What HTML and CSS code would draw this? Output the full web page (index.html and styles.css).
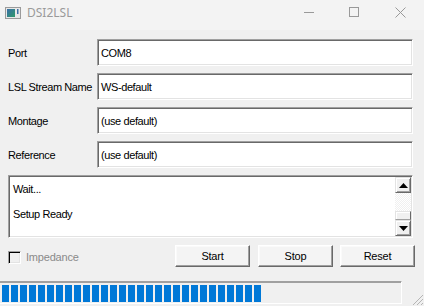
FILE: index.html
```html
<!DOCTYPE html>
<html>
<head>
<meta charset="utf-8">
<link rel="stylesheet" href="styles.css">
</head>
<body>
<div class="window">
  <div class="titlebar">
    <svg class="appicon" width="16" height="12" viewBox="0 0 16 12">
      <defs>
        <linearGradient id="g" x1="0" y1="0" x2="1" y2="1">
          <stop offset="0" stop-color="#3a6ea8"/>
          <stop offset="1" stop-color="#2f9a6a"/>
        </linearGradient>
      </defs>
      <rect x="0.5" y="0.5" width="15" height="11" fill="#e8e8e8" stroke="#9a9a9a"/>
      <rect x="2" y="2" width="8" height="8" fill="url(#g)"/>
      <rect x="12" y="2" width="1.5" height="5" fill="#3d6fa6"/>
    </svg>
    <span class="title">DSI2LSL</span>
    <div class="controls">
      <svg class="ctl" width="46" height="30" viewBox="0 0 46 30"><line x1="18" y1="12.5" x2="28" y2="12.5" stroke="#999" stroke-width="1"/></svg>
      <svg class="ctl" width="46" height="30" viewBox="0 0 46 30"><rect x="17.5" y="7.5" width="9" height="9" fill="none" stroke="#999" stroke-width="1"/></svg>
      <svg class="ctl" width="46" height="30" viewBox="0 0 46 30"><path d="M17.5 7.5 L27.5 17.5 M27.5 7.5 L17.5 17.5" stroke="#999" stroke-width="1"/></svg>
    </div>
  </div>
  <div class="content">
    <div class="row"><label class="lbl">Port</label><div class="field">COM8</div></div>
    <div class="row"><label class="lbl">LSL Stream Name</label><div class="field">WS-default</div></div>
    <div class="row"><label class="lbl">Montage</label><div class="field">(use default)</div></div>
    <div class="row"><label class="lbl">Reference</label><div class="field">(use default)</div></div>
    <div class="log">
      <div class="logtext">
        <div class="line">Wait...</div>
        <div class="line">&nbsp;</div>
        <div class="line">Setup Ready</div>
      </div>
      <div class="scrollbar">
        <div class="sbtn"><svg width="9" height="5" viewBox="0 0 9 5"><path d="M4.5 0 L9 5 L0 5 Z" fill="#000"/></svg></div>
        <div class="track"></div>
        <div class="thumb"></div>
        <div class="sbtn"><svg width="9" height="5" viewBox="0 0 9 5"><path d="M0 0 L9 0 L4.5 5 Z" fill="#000"/></svg></div>
      </div>
    </div>
    <div class="actions">
      <div class="check"><span class="box"></span><span class="checklbl">Impedance</span></div>
      <button class="btn">Start</button>
      <button class="btn">Stop</button>
      <button class="btn">Reset</button>
    </div>
  </div>
  <div class="status">
    <div class="progress"><div class="fill"></div></div>
    <svg class="grip" width="14" height="14" viewBox="0 0 14 14">
      <path d="M13 3 L3 13 M13 7 L7 13 M13 11 L11 13" stroke="#b5b5b5" stroke-width="1"/>
    </svg>
  </div>
</div>
</body>
</html>
```
FILE: styles.css
```css
* { box-sizing: border-box; }
html, body { margin: 0; padding: 0; }
body {
  width: 424px;
  height: 306px;
  overflow: hidden;
  background: #f0f0f0;
  font-family: "Liberation Sans", Arial, sans-serif;
  font-size: 11px;
  color: #000;
}
.window {
  width: 424px;
  height: 306px;
  display: flex;
  flex-direction: column;
  background: #f0f0f0;
}
.titlebar {
  height: 30px;
  display: flex;
  align-items: center;
  background: #f3f3f3;
  flex: none;
}
.appicon { margin-left: 5px; margin-top: -5px; flex: none; }
.title {
  margin-left: 6px;
  margin-top: -5px;
  font-family: "Noto Sans", "Open Sans", sans-serif;
  font-size: 12px;
  color: #9a9a9a;
}
.controls { margin-left: auto; display: flex; align-items: flex-start; height: 30px; }
.ctl { display: block; }
.content {
  padding: 9px 10px 0 8px;
  flex: none;
}
.row {
  display: flex;
  height: 27px;
  margin-bottom: 7px;
  align-items: stretch;
}
.row:nth-child(4) { margin-bottom: 0; }
.lbl {
  width: 89px;
  flex: none;
  display: flex;
  align-items: center;
  letter-spacing: -0.4px;
}
.field {
  flex: 1;
  margin-right: 1px;
  background: #fff;
  border-top: 1px solid #a0a0a0;
  border-left: 1px solid #a0a0a0;
  border-right: 1px solid #fff;
  border-bottom: 1px solid #fff;
  box-shadow: inset 1px 1px 0 #696969, inset -1px -1px 0 #e3e3e3;
  display: flex;
  align-items: center;
  padding-left: 3px;
  letter-spacing: -0.4px;
}
.log {
  margin-top: 7px;
  margin-right: 1px;
  height: 63px;
  display: flex;
  background: #fff;
  border-top: 1px solid #a0a0a0;
  border-left: 1px solid #a0a0a0;
  border-right: 1px solid #fff;
  border-bottom: 1px solid #fff;
  box-shadow: inset 1px 1px 0 #696969, inset -1px -1px 0 #e3e3e3;
}
.logtext {
  flex: 1;
  padding: 7px 0 0 4px;
  letter-spacing: -0.4px;
}
.line { height: 12.5px; line-height: 12.5px; }
.scrollbar {
  width: 16px;
  flex: none;
  margin: 1px 1px 1px 0;
  display: flex;
  flex-direction: column;
}
.sbtn {
  height: 16px;
  flex: none;
  background: #f0f0f0;
  border-top: 1px solid #e3e3e3;
  border-left: 1px solid #e3e3e3;
  border-right: 1px solid #696969;
  border-bottom: 1px solid #696969;
  box-shadow: inset 1px 1px 0 #fff, inset -1px -1px 0 #a0a0a0;
  display: flex;
  align-items: center;
  justify-content: center;
}
.sbtn svg { display: block; }
.track {
  flex: 1;
  background-color: #fff;
  background-image: repeating-conic-gradient(#f0f0f0 0 25%, #fff 0 50%);
  background-size: 2px 2px;
}
.thumb {
  height: 9px;
  flex: none;
  background: #f0f0f0;
  border-top: 1px solid #e3e3e3;
  border-left: 1px solid #e3e3e3;
  border-right: 1px solid #696969;
  border-bottom: 1px solid #a0a0a0;
  box-shadow: inset 1px 1px 0 #fff;
}
.actions {
  margin-top: 7px;
  height: 22px;
  display: flex;
  align-items: stretch;
}
.check {
  flex: 1;
  display: flex;
  align-items: center;
}
.box {
  width: 13px;
  height: 13px;
  margin-top: 2px;
  background: #f0f0f0;
  border-top: 1px solid #a0a0a0;
  border-left: 1px solid #a0a0a0;
  border-right: 1px solid #fff;
  border-bottom: 1px solid #fff;
  box-shadow: inset 1px 1px 0 #000, inset -1px -1px 0 #e3e3e3;
}
.checklbl {
  margin-left: 5px;
  margin-top: 2px;
  color: #8a8a8a;
  letter-spacing: -0.2px;
}
.btn {
  width: 75px;
  margin-left: 8px;
  padding: 0;
  font-family: "Liberation Sans", Arial, sans-serif;
  font-size: 11px;
  letter-spacing: -0.2px;
  color: #000;
  background: #f4f4f4;
  border-top: 1px solid #fff;
  border-left: 1px solid #fff;
  border-right: 1px solid #696969;
  border-bottom: 1px solid #696969;
  box-shadow: inset -1px -1px 0 #a0a0a0, inset 1px 1px 0 #fafafa;
}
.btn:last-child { margin-left: 7px; margin-right: -1px; }
.status {
  margin-top: 14px;
  height: 25px;
  display: flex;
  align-items: flex-start;
}
.progress {
  width: 402px;
  height: 23px;
  border-top: 1px solid #a0a0a0;
  border-right: 1px solid #fff;
  border-bottom: 1px solid #fff;
  box-shadow: inset 0 1px 0 #a0a0a0;
  padding: 3px 0 0 2px;
}
.fill {
  width: 259px;
  height: 17px;
  background-image: repeating-linear-gradient(to right, #0078d7 0 7px, transparent 7px 9px);
}
.grip { margin-top: 11px; margin-left: 8px; display: block; }
```
